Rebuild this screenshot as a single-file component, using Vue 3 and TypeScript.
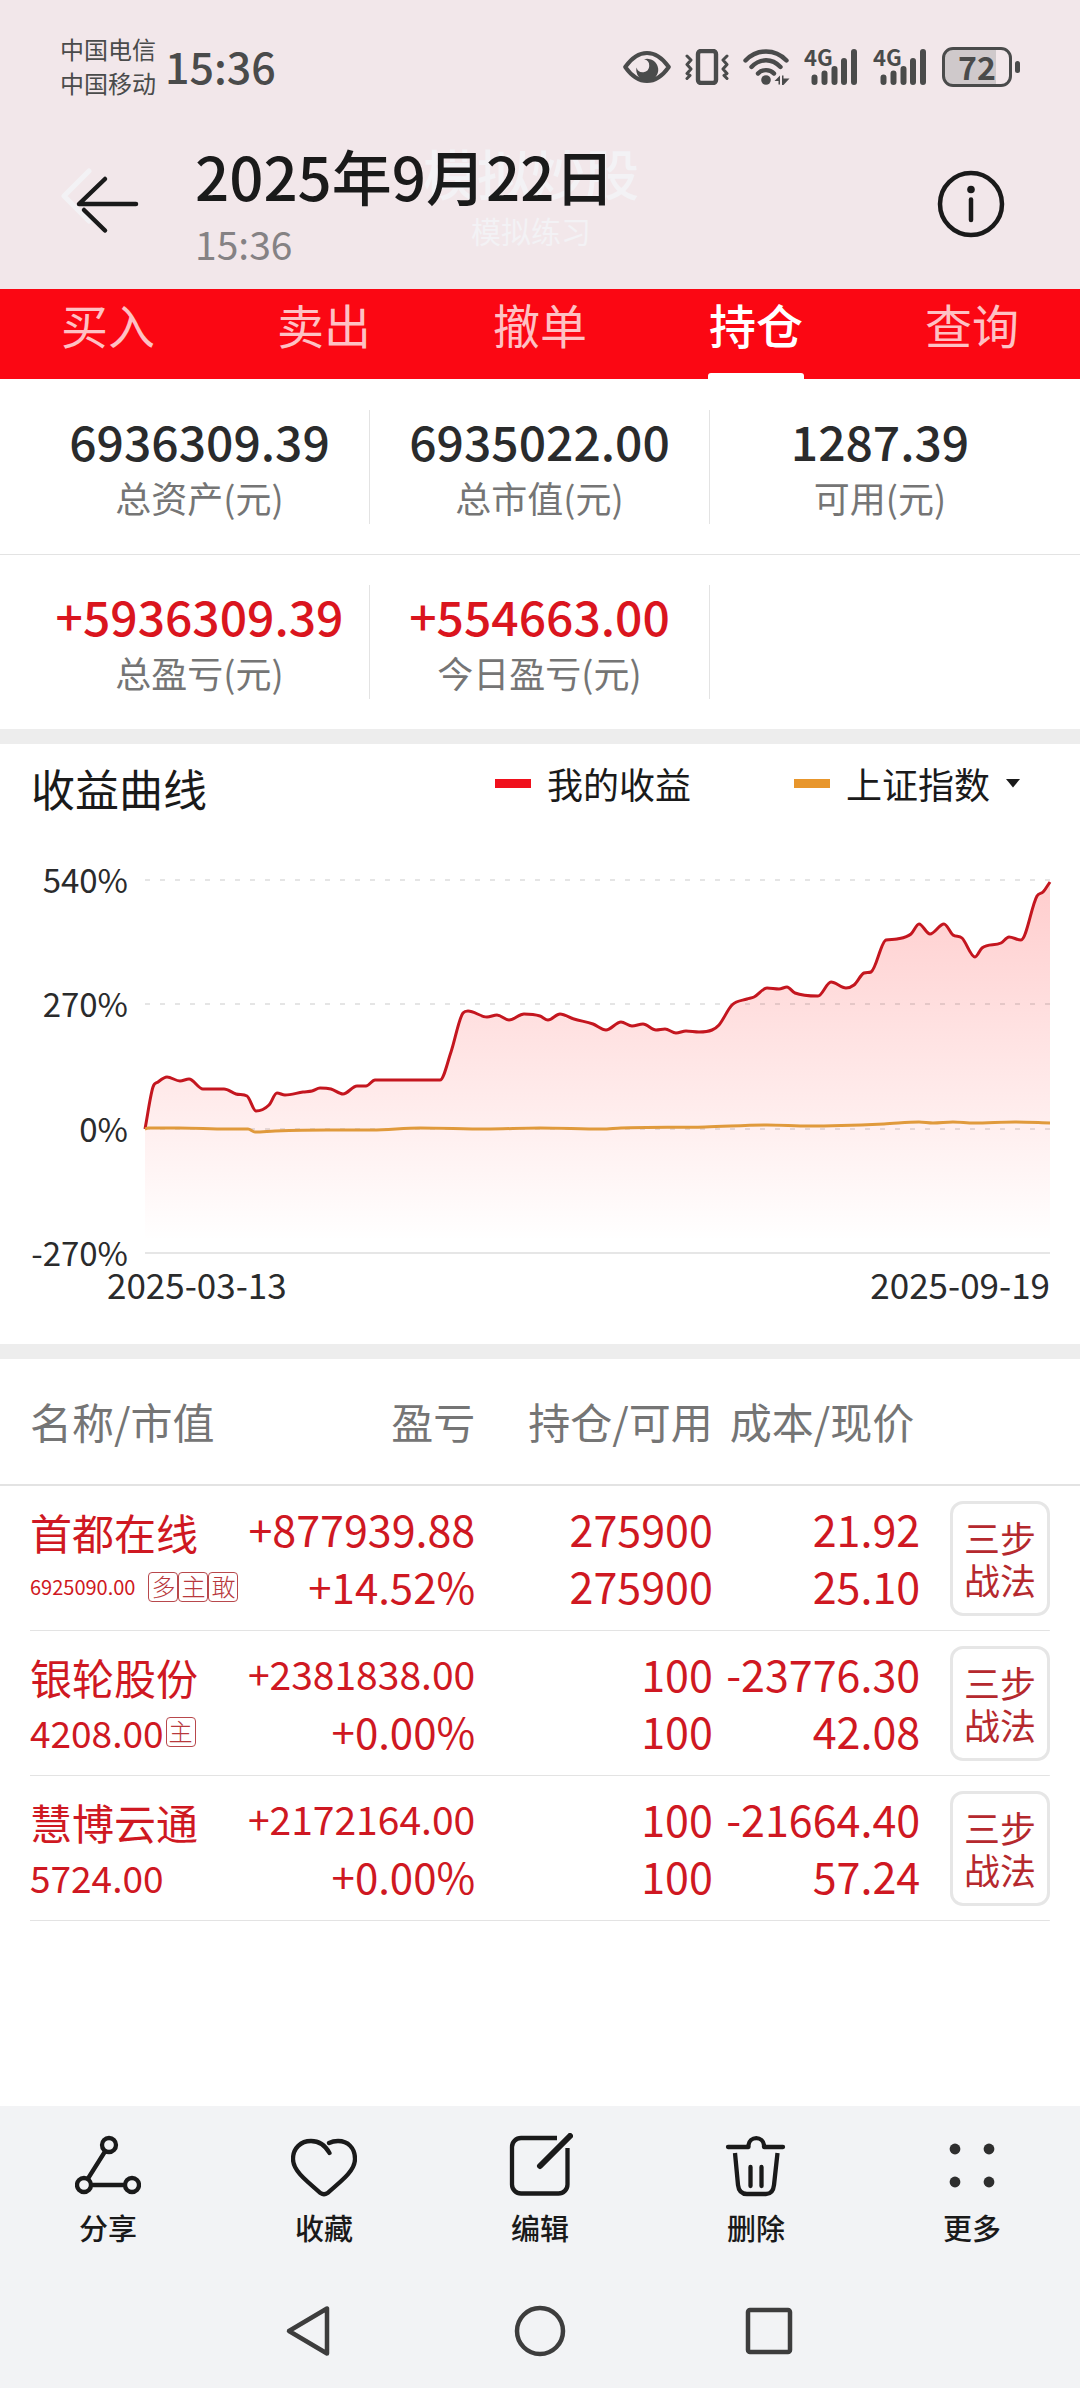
<script setup lang="ts">
import { ref } from 'vue'

interface Metric {
  value: string
  label: string
  gain?: boolean
}

interface Holding {
  name: string
  marketValue: string
  compact?: boolean
  tags: string[]
  profit: string
  profitRate: string
  held: string
  available: string
  cost: string
  price: string
}

type Point = [number, number]

const tabs: string[] = ['买入', '卖出', '撤单', '持仓', '查询']
const activeTab = ref('持仓')
const benchmark = ref('上证指数')

const metricRows: Metric[][] = [
  [
    { value: '6936309.39', label: '总资产(元)' },
    { value: '6935022.00', label: '总市值(元)' },
    { value: '1287.39', label: '可用(元)' },
  ],
  [
    { value: '+5936309.39', label: '总盈亏(元)', gain: true },
    { value: '+554663.00', label: '今日盈亏(元)', gain: true },
  ],
]

const yLabels: string[] = ['540%', '270%', '0%', '-270%']

const holdings: Holding[] = [
  {
    name: '首都在线', marketValue: '6925090.00', compact: true, tags: ['多', '主', '敢'],
    profit: '+877939.88', profitRate: '+14.52%', held: '275900', available: '275900', cost: '21.92', price: '25.10',
  },
  {
    name: '银轮股份', marketValue: '4208.00', tags: ['主'],
    profit: '+2381838.00', profitRate: '+0.00%', held: '100', available: '100', cost: '-23776.30', price: '42.08',
  },
  {
    name: '慧博云通', marketValue: '5724.00', tags: [],
    profit: '+2172164.00', profitRate: '+0.00%', held: '100', available: '100', cost: '-21664.40', price: '57.24',
  },
]

// Curve samples in plot units: 905 wide, 373 high (540% at the top, -270% at the bottom)
const mine: Point[] = [
  [0, 249], [8, 207], [13, 202], [22, 197], [35, 201], [44, 199], [58, 209], [79, 209], [91, 214], [102, 216],
  [111, 231], [124, 225], [132, 213], [140, 215], [158, 212], [167, 211], [175, 208], [186, 209], [198, 214],
  [212, 206], [221, 206], [230, 200], [295, 200], [306, 172], [318, 133], [323, 131], [342, 137], [352, 135],
  [364, 140], [379, 134], [395, 136], [403, 140], [415, 134], [429, 139], [448, 144], [461, 150], [476, 142],
  [487, 146], [498, 144], [511, 150], [520, 149], [531, 153], [541, 151], [554, 152], [567, 150], [574, 145],
  [587, 125], [602, 119], [609, 117], [622, 108], [634, 109], [642, 107], [650, 113], [673, 116], [686, 102],
  [701, 108], [709, 105], [719, 93], [726, 92], [741, 60], [752, 59], [766, 54], [774, 44], [785, 54], [799, 44],
  [808, 55], [817, 58], [830, 77], [837, 68], [856, 63], [864, 57], [876, 60], [892, 16], [898, 12], [905, 2],
]
const index: Point[] = [
  [0, 249], [3, 248], [34, 248], [82, 249], [103, 249], [110, 252], [130, 251], [182, 250], [227, 250], [275, 248],
  [341, 249], [395, 248], [457, 249], [476, 248], [560, 247], [622, 245], [664, 246], [739, 244], [774, 242],
  [788, 243], [808, 242], [829, 243], [870, 242], [905, 243],
]

// Monotone cubic interpolation keeps the flat stretches flat
function smooth(points: Point[]): string {
  const slopes = points.slice(1).map((p, i) => (p[1] - points[i][1]) / (p[0] - points[i][0]))
  const tangents = points.map((_, i) => {
    if (i === 0) return slopes[0]
    if (i === points.length - 1) return slopes[i - 1]
    const a = slopes[i - 1]
    const b = slopes[i]
    if (a * b <= 0) return 0
    return Math.sign(a) * Math.min(Math.abs(a + b) / 2, 3 * Math.abs(a), 3 * Math.abs(b))
  })
  let d = `M${points[0][0]} ${points[0][1]}`
  for (let i = 1; i < points.length; i++) {
    const [x0, y0] = points[i - 1]
    const [x1, y1] = points[i]
    const h = (x1 - x0) / 3
    d += `C${x0 + h} ${y0 + tangents[i - 1] * h} ${x1 - h} ${y1 - tangents[i] * h} ${x1} ${y1}`
  }
  return d
}

const minePath = smooth(mine)
const areaPath = `${minePath}V373H0Z`
const indexPath = smooth(index)
</script>

<template>
  <div class="page">
    <div class="top">
      <div class="status">
        <div class="carriers"><span>中国电信</span><span>中国移动</span></div>
        <span class="clock">15:36</span>
        <div class="status-icons">
          <svg width="48" height="36" viewBox="0 0 48 36">
            <path d="M2.200 18C10 7 17 4 24 4s14 3 21.800 14C38 29 31 32 24 32S10 29 2.200 18Z" fill="none" stroke="#4a4b4b" stroke-width="4" stroke-linejoin="round" />
            <path d="M21 10.300A11 11 0 1 1 13.500 18.500A6.500 6.500 0 1 0 21 10.300Z" fill="#4a4b4b" />
          </svg>
          <svg width="44" height="36" viewBox="0 0 44 36" fill="none" stroke="#4a4b4b" stroke-linejoin="round" stroke-linecap="round">
            <rect x="13" y="2" width="18" height="32" rx="3" stroke-width="4.400" />
            <path d="M2 7l4 4-4 4.500 4 4.500-4 4.500 3 2-3 3M42 7l-4 4 4 4.500-4 4.500 4 4.500-3 2 3 3" stroke-width="3" />
          </svg>
          <svg width="47" height="36" viewBox="0 0 47 36" fill="none" stroke="#4a4b4b" stroke-width="4.400" stroke-linecap="round">
            <path d="M2.500 11.500C14 -.5 32 -.5 43.500 11.500M8.500 18C17 9 29 9 37.500 18M15 24.500C19 20 27 20 31 24.500" />
            <circle cx="23" cy="31" r="4.800" fill="#4a4b4b" stroke="none" />
            <path d="M31.500 32L37 26.500V35.500H35.500V32ZM39 26.500H40.500V29.500H46.500L40.500 36H39Z" fill="#4a4b4b" stroke="none" />
          </svg>
          <svg v-for="n in 2" :key="n" class="signal" width="55" height="52" viewBox="0 -8 55 52" fill="none" stroke="#4a4b4b" stroke-width="6" stroke-linecap="round">
            <text x="0" y="17" class="net">4G</text>
            <path d="M10.500 28.500V33M20.500 24.500V33M30.500 20V33M40 12V33M50 3V33" />
          </svg>
          <div class="battery"><span class="level">72</span><i class="nub"></i></div>
        </div>
      </div>

      <header class="header">
        <div class="behind" aria-hidden="true">
          <svg class="behind-arrow" width="32" height="56" viewBox="0 0 32 56"><path d="M28 3L3 28L28 53" fill="none" stroke="#f3f2f5" stroke-width="5" stroke-linecap="round" stroke-linejoin="round" /></svg>
          <div class="behind-text"><span class="behind-title">模拟炒股</span><span class="behind-sub">模拟练习</span></div>
        </div>
        <button class="icon-btn" aria-label="返回">
          <svg width="64" height="60" viewBox="0 0 64 60" fill="none" stroke="#1a1a1a" stroke-width="4.500" stroke-linecap="round" stroke-linejoin="round">
            <path d="M60 30H3L29 5M8 36L29 56.500" />
          </svg>
        </button>
        <div class="heading">
          <h1>2025年9月22日</h1>
          <p>15:36</p>
        </div>
        <button class="icon-btn" aria-label="详情">
          <svg width="68" height="68" viewBox="0 0 68 68" fill="none" stroke="#1a1a1a" stroke-width="4.500" stroke-linecap="round">
            <circle cx="34" cy="34" r="31" />
            <path d="M34 29.500V50" />
            <circle cx="34" cy="19.500" r="3.800" fill="#1a1a1a" stroke="none" />
          </svg>
        </button>
      </header>
    </div>

    <nav class="tabs">
      <button v-for="tab in tabs" :key="tab" class="tab" :class="{ active: tab === activeTab }" @click="activeTab = tab">{{ tab }}</button>
    </nav>

    <section class="metrics">
      <div v-for="(row, r) in metricRows" :key="r" class="metric-row">
        <div v-for="m in row" :key="m.label" class="metric">
          <strong :class="{ gain: m.gain }">{{ m.value }}</strong>
          <span>{{ m.label }}</span>
        </div>
      </div>
    </section>

    <section class="chart">
      <div class="chart-head">
        <h2>收益曲线</h2>
        <div class="legend">
          <span class="key"><i class="dash"></i>我的收益</span>
          <label class="key">
            <i class="dash index"></i>
            <select v-model="benchmark" aria-label="对比指数"><option>上证指数</option></select>
            <svg class="caret" width="14" height="9" viewBox="0 0 14 9"><path d="M0 0H14L7 8.500Z" fill="#1a1a1a" /></svg>
          </label>
        </div>
      </div>
      <div class="chart-body">
        <div class="y-axis"><span v-for="l in yLabels" :key="l">{{ l }}</span></div>
        <svg class="plot" viewBox="0 0 905 373" preserveAspectRatio="none">
          <defs>
            <linearGradient id="area" x1="0" y1="0" x2="0" y2="373" gradientUnits="userSpaceOnUse">
              <stop offset="0" stop-color="#ff1010" stop-opacity="0.210" />
              <stop offset="0.970" stop-color="#ff1010" stop-opacity="0" />
            </linearGradient>
          </defs>
          <path :d="areaPath" fill="url(#area)" />
          <path d="M0 0H905M0 124H905M0 249H905" stroke="rgba(0,0,0,.1)" stroke-width="2" stroke-dasharray="5 10" />
          <path d="M0 373H905" stroke="#e6e6e6" stroke-width="2" />
          <path :d="minePath" fill="none" stroke="#c4161f" stroke-width="3" stroke-linejoin="round" />
          <path :d="indexPath" fill="none" stroke="#e09a3c" stroke-width="3" stroke-linejoin="round" />
        </svg>
      </div>
      <div class="x-axis"><span>2025-03-13</span><span>2025-09-19</span></div>
    </section>

    <table class="holdings">
      <colgroup><col class="c-name" /><col class="c-profit" /><col class="c-held" /><col class="c-cost" /><col class="c-action" /></colgroup>
      <thead>
        <tr><th>名称/市值</th><th>盈亏</th><th>持仓/可用</th><th>成本/现价</th><th></th></tr>
      </thead>
      <tbody>
        <tr v-for="h in holdings" :key="h.name">
          <td>
            <div class="name">{{ h.name }}</div>
            <div class="sub">
              <span class="value" :class="{ compact: h.compact }">{{ h.marketValue }}</span>
              <span v-for="t in h.tags" :key="t" class="tag">{{ t }}</span>
            </div>
          </td>
          <td><div :class="{ long: h.profit.length > 10 }">{{ h.profit }}</div><div class="rate">{{ h.profitRate }}</div></td>
          <td><div>{{ h.held }}</div><div>{{ h.available }}</div></td>
          <td><div>{{ h.cost }}</div><div>{{ h.price }}</div></td>
          <td class="action"><button class="tactic">三步<br />战法</button></td>
        </tr>
      </tbody>
    </table>

    <footer class="bottom">
      <div class="tools">
        <button class="tool">
          <svg viewBox="0 0 66 66"><circle cx="34" cy="12" r="7" /><circle cx="9" cy="52" r="7" /><circle cx="57" cy="52" r="7" /><path d="M30 18.500L13 45.500M16 52H50" /></svg>
          分享
        </button>
        <button class="tool">
          <svg viewBox="0 0 66 66"><path d="M38.500 20C34 12 27 8 20 8C10 8 2 15 2 26C2 37 13 46 29.500 60Q33 62.500 36.500 60C53 46 64 37 64 26C64 15 57 8 47 8C44 8 41 8.500 38 10" /></svg>
          收藏
        </button>
        <button class="tool">
          <svg viewBox="0 0 66 66"><path d="M50 5H14a9 9 0 0 0-9 9v37.500a9 9 0 0 0 9 9h37.500a9 9 0 0 0 9-9V15" stroke-linecap="butt" /><path d="M33 33L63 3" stroke-width="6" /></svg>
          编辑
        </button>
        <button class="tool">
          <svg viewBox="0 0 66 66"><path d="M5 14H25.500V12a7.800 7.800 0 0 1 15.500 0V14H60M27.500 34V53M38.500 34V53" /><path d="M12 20L15 52Q16 61 24 61H43Q50 61 51 52L54.500 20" stroke-linecap="butt" /></svg>
          删除
        </button>
        <button class="tool">
          <svg viewBox="0 0 66 66" class="dots"><circle cx="16" cy="16" r="5.400" /><circle cx="50" cy="16" r="5.400" /><circle cx="16" cy="49" r="5.400" /><circle cx="50" cy="49" r="5.400" /></svg>
          更多
        </button>
      </div>
      <div class="nav">
        <button aria-label="后退"><svg viewBox="0 0 54 54"><path d="M44 4.500V49.500L6 27Z" /></svg></button>
        <button aria-label="主屏幕"><svg viewBox="0 0 54 54"><circle cx="27" cy="27" r="23" /></svg></button>
        <button aria-label="最近任务"><svg viewBox="0 0 54 54"><rect x="5" y="6" width="42" height="42" rx="2" /></svg></button>
      </div>
    </footer>
  </div>
</template>

<style>
body {
  background: #fff;
}
</style>

<style scoped>
.page {
  min-height: 100vh;
  display: flex;
  flex-direction: column;
  font-family: "Noto Sans CJK SC", sans-serif;
  color: #1a1a1a;
  background: #fff;
}
.page * {
  box-sizing: border-box;
}
h1, h2, p {
  margin: 0;
  font-weight: 400;
}
button, select {
  font: inherit;
  color: inherit;
  background: none;
  border: 0;
  padding: 0;
  margin: 0;
}
svg {
  display: block;
  flex: none;
}
i {
  display: block;
}

.top {
  background: #f2e7ea;
}
.status {
  display: flex;
  align-items: center;
  height: 134px;
  padding: 0 60px;
  color: #4a4b4b;
}
.carriers {
  display: flex;
  flex-direction: column;
  padding-bottom: 3px;
  font-size: 24px;
  line-height: 34px;
}
.clock {
  margin-left: 9px;
  padding-bottom: 4px;
  font-size: 43px;
  line-height: 60px;
  font-weight: 500;
}
.status-icons {
  display: flex;
  align-items: center;
  gap: 14px;
  margin-left: auto;
}
.net {
  font-size: 22px;
  font-weight: 700;
  fill: #4a4b4b;
  stroke: none;
}
.signal {
  overflow: visible;
}
.battery {
  display: flex;
  align-items: center;
  gap: 3px;
}
.level {
  width: 70px;
  height: 40px;
  border: 3px solid #4a4b4b;
  border-radius: 11px;
  background: linear-gradient(90deg, #cfc9cb 80%, transparent 80%);
  font-size: 32px;
  line-height: 32px;
  font-weight: 700;
  text-align: center;
}
.nub {
  width: 5px;
  height: 12px;
  border-radius: 3px;
  background: #4a4b4b;
}

.header {
  position: relative;
  display: flex;
  align-items: center;
  height: 155px;
  padding: 0 75px 18px 76px;
}
.behind {
  position: absolute;
  inset: 0 18px 0 0;
  color: #f3f2f5;
}
.behind-arrow {
  position: absolute;
  left: 61px;
  top: 34px;
}
.behind-text {
  display: flex;
  flex-direction: column;
  align-items: center;
  padding-top: 4px;
}
.behind-title {
  font-size: 54px;
  line-height: 70px;
  font-weight: 500;
}
.behind-sub {
  font-size: 30px;
  line-height: 44px;
}
.icon-btn {
  position: relative;
  padding-top: 2px;
}
.heading {
  position: relative;
  flex: 1;
  padding-left: 55px;
}
.heading h1 {
  font-size: 60px;
  line-height: 80px;
  font-weight: 500;
}
.heading p {
  font-size: 39px;
  line-height: 56px;
  color: #858284;
}

.tabs {
  display: flex;
  height: 90px;
  background: #fb0713;
}
.tab {
  flex: 1;
  display: flex;
  flex-direction: column;
  align-items: center;
  justify-content: space-between;
  font-size: 47px;
  line-height: 70px;
  color: rgba(255, 255, 255, 0.75);
}
.tab.active {
  color: #fff;
  font-weight: 500;
}
.tab.active::after {
  content: "";
  width: 96px;
  height: 6px;
  border-radius: 3px 3px 0 0;
  background: #fff;
}

.metrics {
  border-bottom: 15px solid #ededed;
}
.metric-row {
  display: grid;
  grid-template-columns: repeat(3, 1fr);
  padding: 31px 30px 30px;
}
.metric-row + .metric-row {
  border-top: 1px solid #e3e3e3;
  padding-top: 30px;
}
.metric {
  display: flex;
  flex-direction: column;
  align-items: center;
  border-right: 1px solid #e3e3e3;
}
.metric:nth-child(3) {
  border-right: 0;
}
.metric strong {
  font-size: 48px;
  line-height: 60px;
  font-weight: 500;
  color: #2a2b2c;
}
.metric strong.gain {
  color: #da151e;
}
.metric span {
  font-size: 36px;
  line-height: 54px;
  color: #757575;
}

.chart {
  padding-bottom: 40px;
  border-bottom: 15px solid #ededed;
}
.chart-head {
  display: flex;
  justify-content: space-between;
  align-items: flex-start;
  padding: 0 60px 48px 31px;
}
.chart-head h2 {
  font-size: 44px;
  line-height: 88px;
}
.legend {
  display: flex;
  gap: 103px;
  font-size: 36px;
  line-height: 78px;
}
.key {
  display: flex;
  align-items: center;
}
.key select {
  appearance: none;
  line-height: 56px;
}
.dash {
  width: 36px;
  height: 9px;
  margin-right: 16px;
  background: #f0101c;
}
.dash.index {
  background: #e8962c;
}
.caret {
  margin-left: 15px;
}
.chart-body {
  display: flex;
  height: 373px;
  padding-right: 30px;
}
.y-axis {
  display: flex;
  flex-direction: column;
  justify-content: space-between;
  width: 145px;
  margin: -21px 0 -19px;
  padding-right: 17px;
  text-align: right;
  font-size: 33px;
  line-height: 40px;
  color: #2a2b2c;
}
.plot {
  flex: 1;
  min-width: 0;
  height: 373px;
  overflow: visible;
}
.x-axis {
  display: flex;
  justify-content: space-between;
  padding: 11px 30px 0 107px;
  font-size: 35px;
  line-height: 40px;
  color: #2a2b2c;
}

.holdings {
  width: 100%;
  table-layout: fixed;
  border-collapse: separate;
  border-spacing: 0;
  font-size: 43px;
  line-height: 57px;
  color: #cf1822;
  white-space: nowrap;
}
.c-name {
  width: 22.3%;
}
.c-profit {
  width: 21.7%;
}
.c-held {
  width: 22%;
}
.c-cost {
  width: 19.2%;
}
.holdings th {
  height: 127px;
  padding: 0 0 3px;
  border-bottom: 2px solid #e3e3e3;
  font-size: 42px;
  font-weight: 400;
  color: #757575;
  text-align: right;
}
.holdings th:first-child {
  padding-left: 30px;
  text-align: left;
}
.holdings th:nth-child(4) {
  padding-right: 6px;
}
.holdings tbody tr {
  background: linear-gradient(#e3e3e3, #e3e3e3) center bottom / calc(100% - 60px) 1px no-repeat;
}
.holdings td {
  height: 145px;
  padding: 14px 0 17px;
  text-align: right;
  vertical-align: top;
}
.holdings td:first-child {
  padding-left: 30px;
  text-align: left;
}
.long {
  font-size: 39px;
}
.rate {
  font-size: 42px;
}
.name {
  font-size: 42px;
  line-height: 63px;
}
.sub {
  display: flex;
  align-items: center;
  height: 47px;
}
.value {
  margin-right: 2px;
  font-size: 37px;
  line-height: 46px;
}
.value.compact {
  margin-right: 13px;
  font-size: 20px;
}
.tag {
  width: 30px;
  height: 30px;
  border: 1px solid #b8484c;
  border-radius: 4px;
  font-size: 24px;
  line-height: 26px;
  font-weight: 300;
  text-align: center;
  color: #b8383c;
}
.holdings td.action {
  padding: 15px 30px 14px 0;
}
.tactic {
  display: block;
  width: 100px;
  height: 115px;
  margin-left: auto;
  padding-bottom: 2px;
  border: 3px solid #e6e6e6;
  border-radius: 13px;
  font-size: 36px;
  line-height: 42px;
  color: #b5292e;
}

.bottom {
  margin-top: auto;
  padding: 27px 0 30px;
  background: #f2f3f5;
}
.tools {
  display: flex;
}
.tool {
  flex: 1;
  display: flex;
  flex-direction: column;
  align-items: center;
  gap: 8px;
  font-size: 29px;
  line-height: 40px;
  font-weight: 500;
}
.tool svg {
  width: 66px;
  height: 66px;
  fill: none;
  stroke: #1a1a1a;
  stroke-width: 4.3;
  stroke-linecap: round;
  stroke-linejoin: round;
}
.tool svg.dots {
  fill: #2e2e2e;
  stroke: none;
}
.nav {
  display: flex;
  justify-content: center;
  gap: 176px;
  padding-top: 57px;
}
.nav svg {
  width: 54px;
  height: 54px;
  fill: none;
  stroke: #3d3d3d;
  stroke-width: 4.5;
  stroke-linejoin: round;
}
</style>
